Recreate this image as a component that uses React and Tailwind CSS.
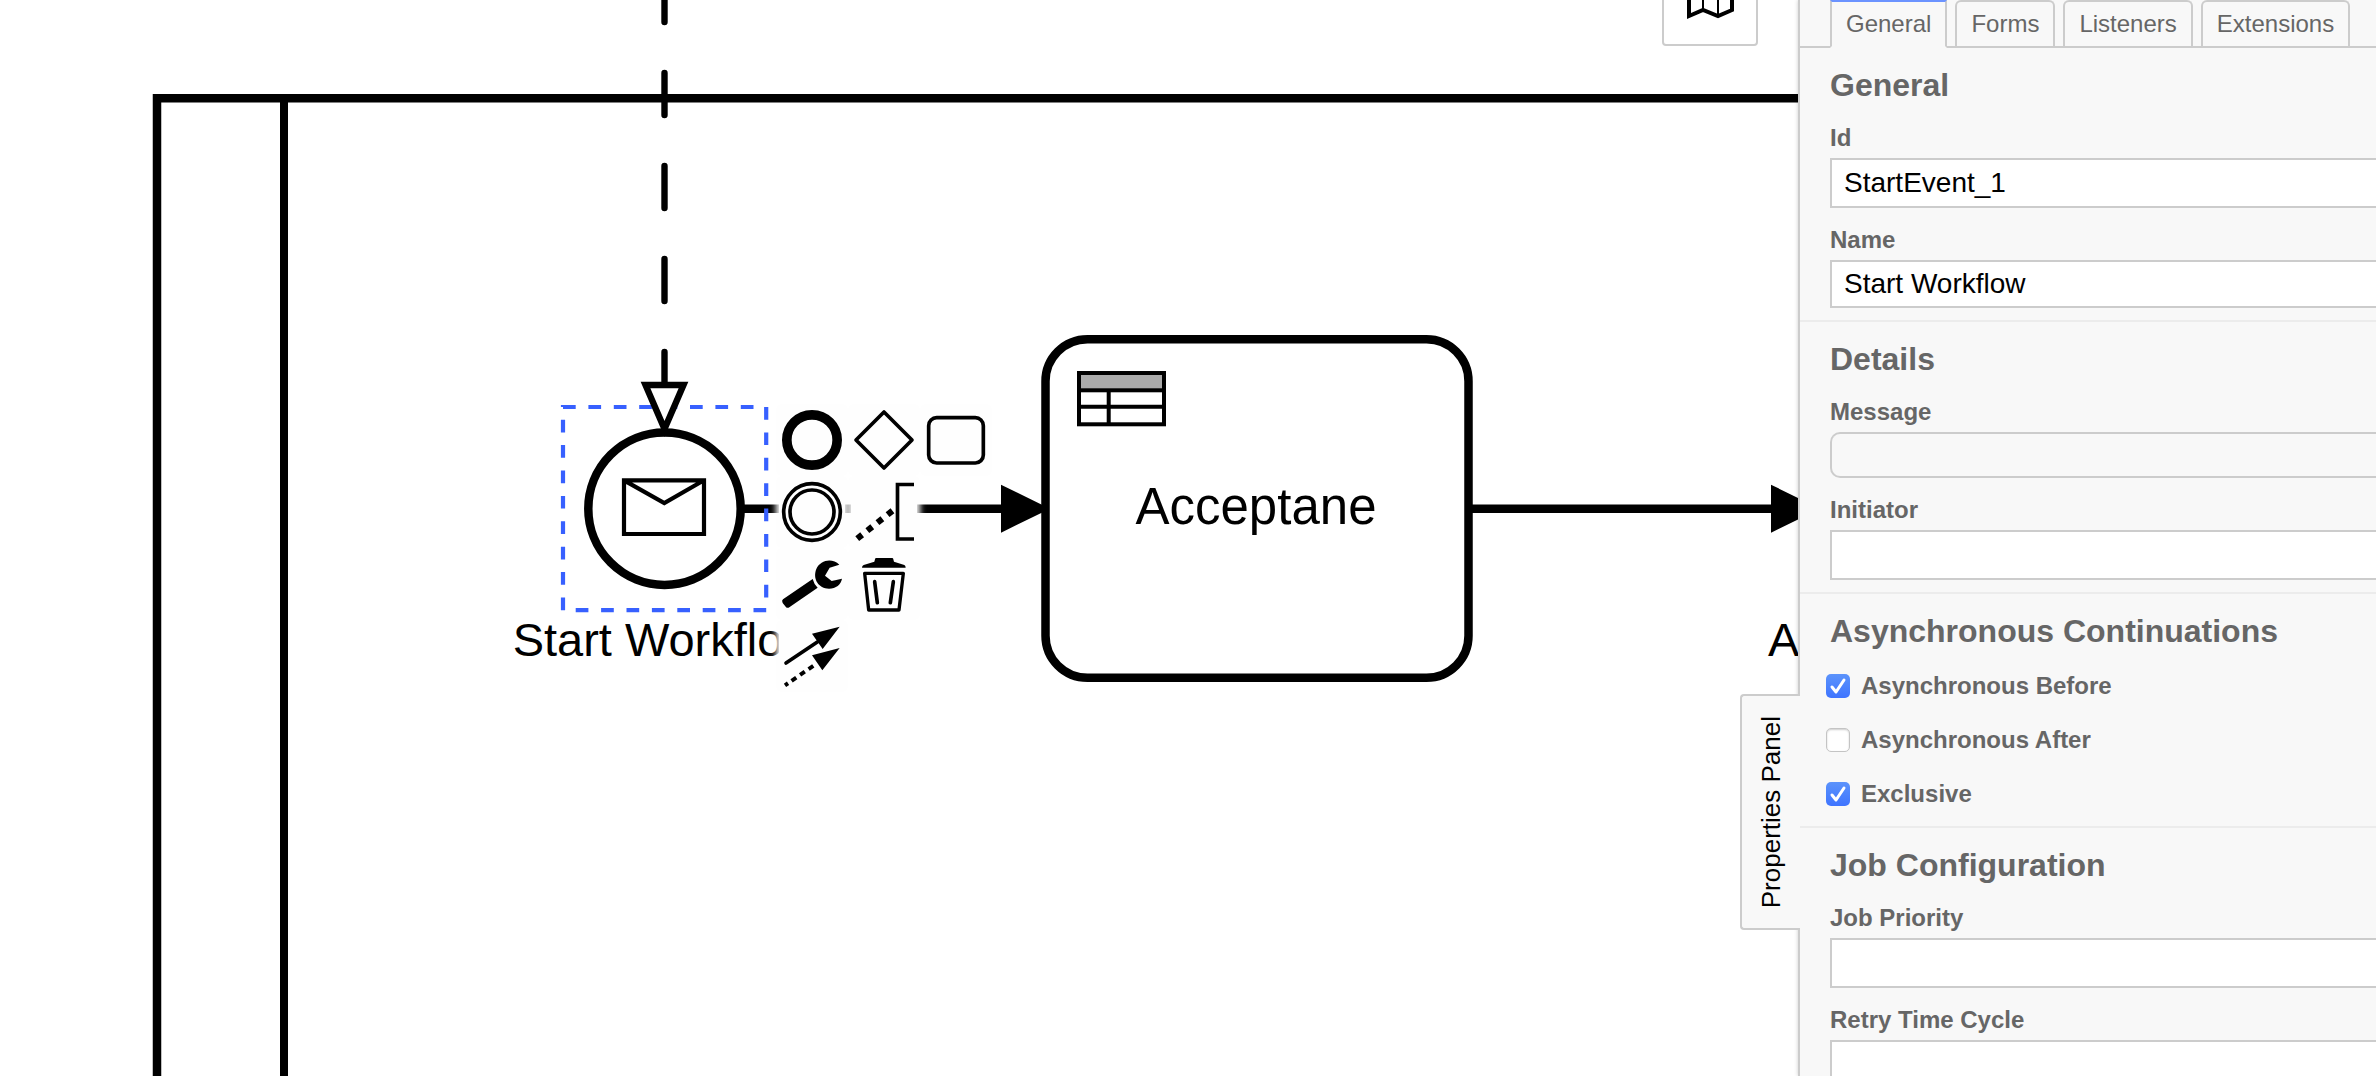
import React from "react";

const tabs = ["General", "Forms", "Listeners", "Extensions"];

function PadButton({ label, className = "", children }) {
  return (
    <button
      type="button"
      aria-label={label}
      className={`size-[66px] bg-[#fefefe] shadow-[0_0_6px_3px_#fefefe] ${className}`}
    >
      <svg viewBox="0 0 198 198" className="block size-full" fill="none" stroke="#000">
        {children}
      </svg>
    </button>
  );
}

function ContextPad() {
  return (
    <div className="absolute top-[407px] left-[779px] grid grid-cols-[repeat(3,66px)] gap-[6px]">
      <PadButton label="Append end event">
        <circle cx="99" cy="99" r="75.5" strokeWidth="29" />
      </PadButton>
      <PadButton label="Append gateway">
        <path d="M99 15 183 99 99 183 15 99Z" strokeWidth="11" strokeLinejoin="round" />
      </PadButton>
      <PadButton label="Append task">
        <rect x="17" y="32" width="164" height="136" rx="24" strokeWidth="11" />
      </PadButton>
      <PadButton label="Append intermediate event">
        <circle cx="99" cy="99" r="85" strokeWidth="11" />
        <circle cx="99" cy="99" r="66" strokeWidth="11" />
      </PadButton>
      <PadButton label="Append text annotation">
        <path d="M189 16.5H139.5V180H189" strokeWidth="11" />
        <path d="M18.7 178.8 124.6 95" strokeWidth="18.5" strokeDasharray="18.7 20" />
      </PadButton>
      <PadButton label="Change type" className="col-start-1">
        <g fill="#000" stroke="none">
          <path d="M181 41C160 20 124 26 112 54 100 84 119 113 150 113 171 113 186 100 189 83L158 90 138 74 152 50Z" />
          <path d="M101 84Q105 100 116 110L31 169Q25 173 20 167L11 156Q7 149 12 145Z" />
        </g>
      </PadButton>
      <PadButton label="Remove">
        <path
          d="M76 21H123Q127 21 127 25L129 32 160 42Q164 44 164 50H33Q33 44 38 42L70 32 72 25Q72 21 76 21Z"
          fill="#000"
          stroke="none"
        />
        <path d="M41 67H157L144 177H53Z" strokeWidth="10" strokeLinejoin="round" />
        <path d="M71 92 79 155M127 92 118 155" strokeWidth="11" strokeLinecap="round" />
      </PadButton>
      <PadButton label="Connect" className="col-start-1">
        <path d="M21 120 115 57" strokeWidth="11" strokeLinecap="round" />
        <path d="M18 187 108 125" strokeWidth="12" strokeDasharray="11 13 17 14 17 14 17 14" />
        <path d="M99 32 182 11 131 78ZM99 97 182 75 130 142Z" fill="#000" stroke="none" />
      </PadButton>
    </div>
  );
}

function Diagram() {
  return (
    <svg
      className="absolute inset-0 size-full font-['Liberation_Sans',Arial,sans-serif]"
      fill="none"
      stroke="#000"
      role="img"
      aria-label="Workflow diagram"
    >
      <g strokeWidth="8.5">
        <path d="M1900 98.3H157V1100" />
        <path d="M284 98V1100" strokeWidth="8" />
      </g>

      <path d="M740 508.7H1004M1472 508.7H1775" strokeWidth="8.5" />
      <path d="M1001 484.7 1050 508.7 1001 532.7ZM1771 484.7 1820 508.7 1771 532.7Z" fill="#000" stroke="none" />

      <rect x="1045.5" y="339.3" width="423" height="338.4" rx="42" fill="#fff" strokeWidth="8.5" />
      <g strokeWidth="4">
        <rect x="1079" y="373" width="85" height="17.3" fill="#aaa" />
        <rect x="1079" y="373" width="85" height="51.3" />
        <path d="M1079 406.8H1164M1108.7 390V424" />
      </g>

      <circle cx="664.5" cy="508.7" r="76.2" fill="#fff" strokeWidth="8.5" />
      <path d="M624 480.3H704V534H624ZM624 480.3 664.3 503 704 480.3" strokeWidth="4.2" />

      <rect x="563" y="407" width="203.2" height="203.2" stroke="#3760ff" strokeWidth="4.2" strokeDasharray="12.7 12.7" />

      <path d="M664.5 -20V384" strokeWidth="6.4" strokeLinecap="round" strokeDasharray="42 51" />
      <path d="M645.5 385H683.5L664.5 429Z" fill="#fff" strokeWidth="6.4" />

      <g fill="#000" stroke="none" textAnchor="middle">
        <text x="665" y="656" fontSize="47">Start Workflow</text>
        <text x="1256" y="524" fontSize="51">Acceptane</text>
        <text x="1768" y="656" fontSize="47" textAnchor="start">A</text>
      </g>
    </svg>
  );
}

function Section({ title, last, children }) {
  return (
    <section className={`flex flex-col gap-[18px] pt-4 pb-3 pl-[30px] ${last ? "" : "border-b-2 border-[#ececec]"}`}>
      <h2 className="text-[32px] leading-[42px] font-bold">{title}</h2>
      {children}
    </section>
  );
}

function Field({ id, label, value = "", className = "h-[50px] bg-white" }) {
  return (
    <div className="flex flex-col gap-[6px]">
      <label htmlFor={id} className="text-2xl leading-[28px] font-bold">
        {label}
      </label>
      <input
        id={id}
        type="text"
        defaultValue={value}
        className={`w-full border-2 border-r-0 border-[#ccc] px-3 text-[28px] text-black ${className}`}
      />
    </div>
  );
}

function Check({ id, label, checked }) {
  return (
    <div className="-ml-1 flex h-8 items-center gap-[11px]">
      <span className="relative size-6">
        <input
          id={id}
          type="checkbox"
          defaultChecked={checked}
          className="peer block size-6 appearance-none rounded-[5px] border border-[#c4c4c4] bg-white shadow-[inset_0_1px_2px_rgba(0,0,0,0.2)] checked:border-0 checked:bg-linear-to-b checked:from-[#5c93fb] checked:to-[#3f74ff] checked:shadow-none"
        />
        <svg
          viewBox="0 0 24 24"
          className="pointer-events-none absolute inset-0 hidden size-6 peer-checked:block"
          fill="none"
          stroke="#fff"
          strokeWidth="3"
          strokeLinecap="round"
          strokeLinejoin="round"
        >
          <path d="M6 13 10 18 18 6" />
        </svg>
      </span>
      <label htmlFor={id} className="text-2xl leading-8 font-bold">
        {label}
      </label>
    </div>
  );
}

export default function App() {
  return (
    <div className="flex h-screen overflow-hidden bg-white font-['Liberation_Sans',Arial,sans-serif] text-[#666]">
      <main className="relative min-w-0 flex-1 overflow-hidden">
        <Diagram />
        <ContextPad />
        <button
          type="button"
          aria-label="Toggle minimap"
          className="absolute -top-[46px] right-[40px] flex h-[92px] w-[96px] items-end justify-center rounded-[4px] border-2 border-[#ccc] bg-white pb-6 text-black"
        >
          <svg viewBox="0 0 48 48" className="size-12" fill="none" stroke="currentColor" strokeWidth="4">
            <path d="M3 9 17 3 32 9 46 3V38L32 44 17 38 3 44Z" />
            <path d="M17 3V38M32 9V44" strokeWidth="2" />
          </svg>
        </button>
      </main>

      <aside className="relative w-[578px] shrink-0 border-l-2 border-[#ccc] bg-[#f8f8f8] shadow-[0_0_4px_rgba(0,0,0,0.2)]">
        <button
          type="button"
          className="absolute top-[694px] -left-[60px] flex h-[236px] w-[60px] items-center justify-center rounded-l-[4px] border-2 border-r-0 border-[#ccc] bg-[#f8f8f8] text-[26px] text-black"
        >
          <span className="rotate-180 [writing-mode:vertical-rl]">Properties Panel</span>
        </button>

        <div role="tablist" className="flex h-12 items-end gap-2 border-b-2 border-[#ccc] pl-[30px]">
          {tabs.map((tab, i) => (
            <button
              key={tab}
              type="button"
              role="tab"
              aria-selected={i === 0}
              className={
                i === 0
                  ? "-mb-[2px] h-12 border-2 border-[#ccc] border-t-[#6b93ff] border-b-[#f8f8f8] bg-[#f8f8f8] px-[14px] text-2xl leading-[28px]"
                  : "h-[46px] rounded-t-[6px] border-2 border-b-0 border-[#ccc] px-[14px] text-2xl leading-[28px]"
              }
            >
              {tab}
            </button>
          ))}
        </div>

        <Section title="General">
          <Field id="element-id" label="Id" value="StartEvent_1" />
          <Field id="element-name" label="Name" value="Start Workflow" className="h-12 bg-white" />
        </Section>
        <Section title="Details">
          <Field id="message" label="Message" className="h-[46px] rounded-l-[10px] bg-transparent" />
          <Field id="initiator" label="Initiator" />
        </Section>
        <Section title="Asynchronous Continuations">
          <div className="flex flex-col gap-[22px] pb-1">
            <Check id="async-before" label="Asynchronous Before" checked />
            <Check id="async-after" label="Asynchronous After" />
            <Check id="exclusive" label="Exclusive" checked />
          </div>
        </Section>
        <Section title="Job Configuration" last>
          <Field id="job-priority" label="Job Priority" />
          <Field id="retry-cycle" label="Retry Time Cycle" />
        </Section>
      </aside>
    </div>
  );
}
